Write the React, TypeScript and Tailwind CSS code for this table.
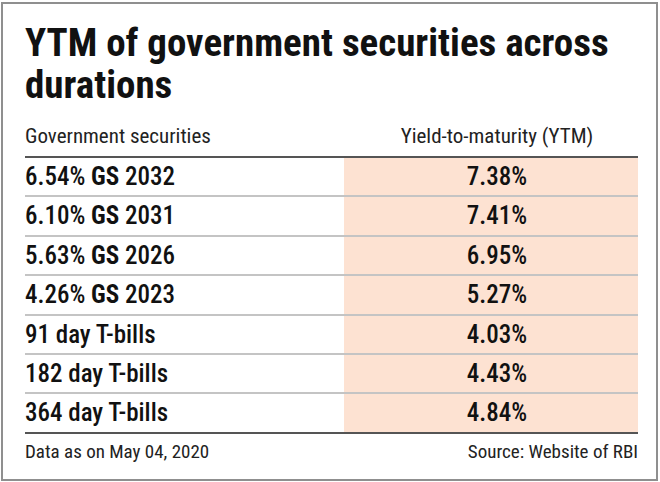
const ROWS = [
  { rate: '6.54%', name: 'GS', year: '2032', ytm: '7.38%' },
  { rate: '6.10%', name: 'GS', year: '2031', ytm: '7.41%' },
  { rate: '5.63%', name: 'GS', year: '2026', ytm: '6.95%' },
  { rate: '4.26%', name: 'GS', year: '2023', ytm: '5.27%' },
  { label: '91 day T-bills', ytm: '4.03%' },
  { label: '182 day T-bills', ytm: '4.43%' },
  { label: '364 day T-bills', ytm: '4.84%' },
];

export default function App() {
  return (
    <div className="w-[660px] h-[482px] bg-white pt-[2px] pl-[1px] font-['Roboto_Condensed','Liberation_Sans',sans-serif] text-[#111]">
      <div className="w-[657px] h-[479px] border-2 border-[#8f8f8f] pl-[22px] pr-[18px] pt-[18px]">
        <h1 className="text-[39px] leading-[42px] font-bold">
          YTM of government securities across durations
        </h1>

        <div className="mt-[18px] flex border-b-2 border-[#555] pb-[7px] text-[21px] leading-[25px] text-[#222]">
          <div className="w-[319px]">Government securities</div>
          <div className="flex-1 text-center pl-3">Yield-to-maturity (YTM)</div>
        </div>

        {ROWS.map((r, i) => (
          <div
            key={i}
            className={
              i === ROWS.length - 1
                ? 'flex h-[39.4px] border-b-2 border-[#555] text-[25px] font-medium'
                : 'flex h-[39.4px] border-b-2 border-[#c4c4c4] text-[25px] font-medium'
            }
          >
            <div className="w-[319px] flex items-center">
              {r.label ? (
                <span>{r.label}</span>
              ) : (
                <span>
                  {r.rate} <span className="font-bold">{r.name}</span> {r.year}
                </span>
              )}
            </div>
            <div className="flex-1 bg-[#fde2d2] flex items-center justify-center pl-3">
              {r.ytm}
            </div>
          </div>
        ))}

        <div className="mt-[6px] flex justify-between text-[19px] leading-[24px] text-[#222]">
          <span>Data as on May 04, 2020</span>
          <span>Source: Website of RBI</span>
        </div>
      </div>
    </div>
  );
}
